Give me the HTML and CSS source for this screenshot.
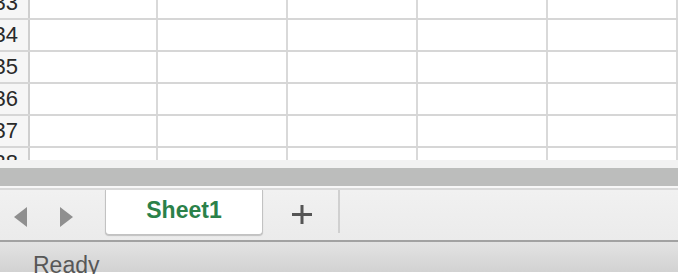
FILE: index.html
```html
<!DOCTYPE html>
<html>
<head>
<meta charset="utf-8">
<link rel="stylesheet" href="styles.css">
</head>
<body>
<div class="app">
  <div class="grid">
    <div class="rows">
      <div class="row"><div class="hdr">33</div><div class="cell first"></div><div class="cell"></div><div class="cell"></div><div class="cell"></div><div class="cell"></div></div>
      <div class="row"><div class="hdr">34</div><div class="cell first"></div><div class="cell"></div><div class="cell"></div><div class="cell"></div><div class="cell"></div></div>
      <div class="row"><div class="hdr">35</div><div class="cell first"></div><div class="cell"></div><div class="cell"></div><div class="cell"></div><div class="cell"></div></div>
      <div class="row"><div class="hdr">36</div><div class="cell first"></div><div class="cell"></div><div class="cell"></div><div class="cell"></div><div class="cell"></div></div>
      <div class="row"><div class="hdr">37</div><div class="cell first"></div><div class="cell"></div><div class="cell"></div><div class="cell"></div><div class="cell"></div></div>
      <div class="row"><div class="hdr">38</div><div class="cell first"></div><div class="cell"></div><div class="cell"></div><div class="cell"></div><div class="cell"></div></div>
    </div>
  </div>
  <div class="strip"></div>
  <div class="hscroll"></div>
  <div class="gap"></div>
  <div class="tabbar">
    <div class="nav">
      <svg class="arrow" width="13" height="20" viewBox="0 0 13 20"><polygon points="0,10 13,0 13,20" /></svg>
      <svg class="arrow" width="13" height="20" viewBox="0 0 13 20"><polygon points="13,10 0,0 0,20" /></svg>
    </div>
    <div class="tab">Sheet1</div>
    <svg class="plus" width="20" height="20" viewBox="0 0 20 20"><rect x="0" y="8" width="20" height="3" /><rect x="8.5" y="0" width="3" height="19" /></svg>
    <div class="sep"></div>
  </div>
  <div class="status">Ready</div>
</div>
</body>
</html>
```

FILE: styles.css
```css
html, body {
  margin: 0;
  padding: 0;
  background: #ffffff;
}

.app {
  width: 678px;
  height: 274px;
  overflow: hidden;
  display: flex;
  flex-direction: column;
  font-family: "Liberation Sans", Arial, sans-serif;
}

.grid {
  height: 160px;
  flex: none;
  overflow: hidden;
  background: #ffffff;
}

.rows {
  margin-top: -12px;
}

.row {
  display: flex;
  height: 32px;
  box-sizing: border-box;
  border-bottom: 2px solid #d6d6d6;
}

.hdr {
  width: 30px;
  flex: none;
  height: 30px;
  box-sizing: border-box;
  padding-right: 10px;
  line-height: 30px;
  font-size: 22px;
  color: #2a2a2a;
  text-align: right;
  white-space: nowrap;
  overflow: hidden;
  direction: rtl;
  background: #f6f6f6;
  border-right: 2px solid #cfcfcf;
}

.cell {
  width: 128px;
  flex: none;
  height: 30px;
  border-right: 2px solid #d9d9d9;
}

.cell.first {
  width: 126px;
}

.strip {
  height: 8px;
  flex: none;
  background: #f2f2f2;
}

.hscroll {
  height: 18px;
  flex: none;
  background: #bcbdbc;
}

.gap {
  height: 2px;
  flex: none;
  background: #f7f7f7;
}

.tabbar {
  height: 54px;
  flex: none;
  box-sizing: border-box;
  border-top: 2px solid #d9d9d9;
  border-bottom: 2px solid #a2a2a2;
  background: linear-gradient(#f1f1f1, #ebebeb);
  display: flex;
  align-items: flex-start;
}

.nav {
  display: flex;
  gap: 33px;
  padding-left: 14px;
  padding-top: 17px;
}

.arrow polygon {
  fill: #8f8f8f;
}

.tab {
  margin-left: 32px;
  width: 158px;
  height: 45px;
  box-sizing: border-box;
  padding-top: 9px;
  background: #ffffff;
  border: 1px solid #c2c2c2;
  border-top: none;
  border-radius: 0 0 4px 4px;
  box-shadow: 0 1px 1px rgba(0, 0, 0, 0.18);
  text-align: center;
  font-size: 23px;
  line-height: 23px;
  font-weight: bold;
  color: #2b8149;
}

.plus {
  margin-left: 29px;
  margin-top: 15px;
}

.plus rect {
  fill: #555555;
}

.sep {
  width: 2px;
  height: 43px;
  margin-left: 26px;
  background: #d0d0d0;
}

.status {
  height: 30px;
  flex: none;
  box-sizing: border-box;
  padding-left: 33px;
  padding-top: 12px;
  font-size: 23px;
  line-height: 23px;
  color: #575757;
  background: linear-gradient(#e3e3e3, #d2d2d2);
}
```
